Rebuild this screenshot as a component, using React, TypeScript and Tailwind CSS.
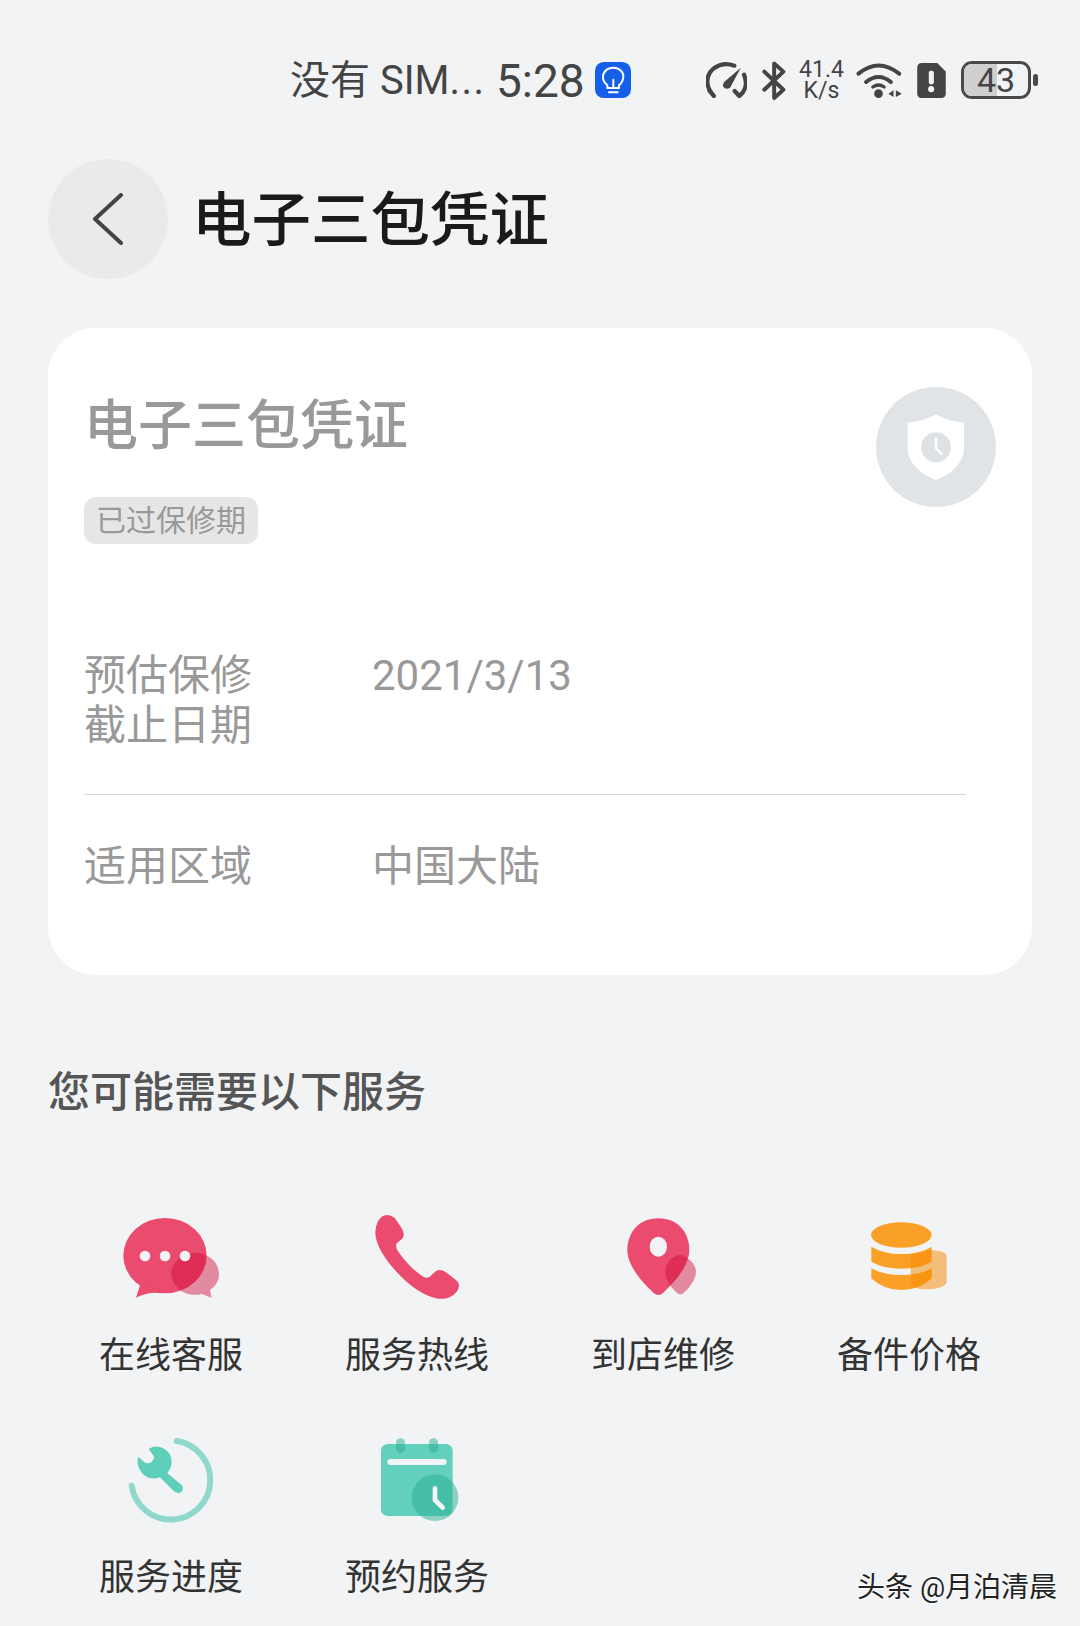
const cjk = "font-['Roboto','Noto_Sans_CJK_SC',sans-serif]";

function ChatIcon() {
  return (
    <svg viewBox="63 39 300 270" className="h-full w-full">
      <ellipse cx="195" cy="167" rx="125" ry="113" fill="#eb4b6e" />
      <path d="M122 250 L108 293 Q145 275 180 279 Z" fill="#eb4b6e" />
      <path
        d="M286 159 C326 159 357 187 357 222 C357 245 346 258 330 270 L335 293 L305 282 C292 286 270 286 250 277 C228 262 214 245 214 222 C214 187 246 159 286 159 Z"
        fill="#d00a3a"
        opacity="0.45"
      />
      <circle cx="135" cy="168" r="16" fill="#f7f3f5" />
      <circle cx="195" cy="168" r="16" fill="#f7f3f5" />
      <circle cx="255" cy="168" r="16" fill="#f7f3f5" />
    </svg>
  );
}

function PhoneIcon() {
  return (
    <svg viewBox="801 39 300 270" className="h-full w-full">
      <path
        d="M845 50 Q865 38 885 55 L905 85 Q918 105 905 118 L890 130 Q885 140 895 155 Q930 205 970 230 Q985 238 995 225 L1008 213 Q1022 205 1040 218 L1068 240 Q1085 255 1070 275 Q1050 300 1015 296 Q950 285 880 205 Q825 140 826 95 Q828 65 845 50 Z"
        fill="#eb4b6e"
      />
    </svg>
  );
}

function PinIcon() {
  return (
    <svg viewBox="39 39 300 270" className="h-full w-full">
      <path
        d="M175 55 C235 55 268 100 268 150 C268 205 205 265 185 282 Q175 288 165 282 C145 265 82 205 82 150 C82 100 115 55 175 55 Z"
        fill="#eb4b6e"
      />
      <ellipse cx="175" cy="140" rx="26" ry="30" fill="#f1f3f5" />
      <path
        d="M243 165 C270 175 288 195 288 215 C288 240 262 270 248 281 Q241 285 234 281 C215 265 196 240 196 215 C196 185 220 165 243 165 Z"
        fill="#d00a3a"
        opacity="0.45"
      />
    </svg>
  );
}

function StackIcon() {
  return (
    <svg viewBox="777 39 300 270" className="h-full w-full">
      <ellipse cx="904" cy="105" rx="91" ry="38" fill="#fba026" />
      <path d="M814 140 Q850 162 904 162 Q960 162 995 140 L995 185 Q960 206 904 206 Q850 206 814 185 Z" fill="#fba026" />
      <path d="M814 205 Q850 225 904 225 Q960 225 995 205 L995 235 Q960 270 904 270 Q850 270 814 235 Z" fill="#fba026" />
      <path
        d="M990 150 C1025 152 1040 158 1040 170 V245 C1040 262 1000 268 975 268 C955 268 940 262 932 255 V162 C955 162 975 158 990 150 Z"
        fill="#f58a00"
        opacity="0.5"
      />
    </svg>
  );
}

function WrenchIcon() {
  return (
    <svg viewBox="33 45 300 270" className="h-full w-full">
      <path d="M200 63 A118.5 118.5 0 1 1 65 197" fill="none" stroke="#8fd8cb" strokeWidth="18" strokeLinecap="round" />
      <path
        d="M116 86 Q150 68 178 100 Q195 130 172 160 L215 195 Q225 210 210 218 Q198 222 188 210 L150 172 Q110 185 90 150 Q78 130 85 110 L105 128 Q125 135 133 112 Z"
        fill="#5dcfba"
      />
    </svg>
  );
}

function CalendarIcon() {
  return (
    <svg viewBox="771 45 300 270" className="h-full w-full">
      <rect x="813" y="72" width="215" height="216" rx="20" fill="#62d0bc" />
      <rect x="858" y="55" width="27" height="43" rx="13" fill="#2aae96" opacity="0.5" />
      <rect x="957" y="55" width="27" height="43" rx="13" fill="#2aae96" opacity="0.5" />
      <rect x="832" y="117" width="178" height="18" rx="9" fill="#f1f3f5" />
      <circle cx="975" cy="233" r="70" fill="#2aae96" opacity="0.5" />
      <path d="M975 205 V240 L998 263" fill="none" stroke="#f5f7f8" strokeWidth="14" strokeLinecap="round" strokeLinejoin="round" />
    </svg>
  );
}

const services = [
  { label: "在线客服", icon: <ChatIcon /> },
  { label: "服务热线", icon: <PhoneIcon /> },
  { label: "到店维修", icon: <PinIcon /> },
  { label: "备件价格", icon: <StackIcon /> },
  { label: "服务进度", icon: <WrenchIcon /> },
  { label: "预约服务", icon: <CalendarIcon /> },
];

function StatusBar() {
  return (
    <div className="flex h-[40px] items-center pl-[290px] text-[#444444]">
      <span className="w-[196px] whitespace-nowrap pt-[2px] text-[40px] leading-[40px]">
        没有 SIM<span className="tracking-[1.5px]">...</span>
      </span>
      <span className="ml-[10px] w-[85px] pt-[2px] font-['Roboto'] text-[46px] leading-[40px]">5:28</span>
      <svg viewBox="975 65 108 108" className="ml-[14px] h-[36px] w-[36px]">
        <rect x="975" y="65" width="108" height="108" rx="26" fill="#1560e8" />
        <path
          d="M1012 135 C1000 125 997 112 1000 102 C1005 88 1018 82 1030 82 C1045 82 1058 92 1060 105 C1061 118 1055 128 1047 135 V143 H1012 Z"
          fill="none"
          stroke="#fff"
          strokeWidth="6"
          strokeLinejoin="round"
        />
        <path d="M1017 156 H1043 M1030 118 V140" fill="none" stroke="#fff" strokeWidth="6" strokeLinecap="round" />
      </svg>
      <svg viewBox="48 62 126 108" className="ml-[75px] h-[36px] w-[41px]">
        <path d="M72 165 C45 135 45 100 75 78 C95 65 115 65 135 72 M58 148 L72 165" fill="none" stroke="#444" strokeWidth="13" strokeLinecap="round" />
        <path d="M165 100 C175 125 170 150 150 165 L136 150" fill="none" stroke="#444" strokeWidth="13" strokeLinecap="round" />
        <path d="M155 78 L122 140 Q108 148 100 135 Q100 122 112 115 Z" fill="#444" />
      </svg>
      <svg viewBox="212 58 76 118" className="ml-[14px] h-[39px] w-[25px]">
        <path d="M222 90 L280 145 L252 170 V65 L280 90 L222 145" fill="none" stroke="#444" strokeWidth="12" strokeLinejoin="round" strokeLinecap="round" />
      </svg>
      <div className="ml-[13px] w-[45px] text-center font-['Roboto'] text-[23px] leading-[21px]">
        41.4
        <br />
        K/s
      </div>
      <svg viewBox="503 62 137 108" className="ml-[12px] h-[36px] w-[46px]">
        <path d="M510 97 Q570 48 632 97 M533 122 Q570 92 607 122" fill="none" stroke="#444" strokeWidth="12" strokeLinecap="round" />
        <path d="M553 137 Q570 125 587 137" fill="none" stroke="#444" strokeWidth="10" strokeLinecap="round" />
        <circle cx="570" cy="157" r="13" fill="#444" />
        <path d="M615 147 L600 157 L615 167 Z M622 147 L640 157 L622 167 Z" fill="#444" />
      </svg>
      <svg viewBox="686 65 84 103" className="ml-[15px] h-[35px] w-[29px]">
        <path d="M700 65 H745 L770 90 V155 Q770 168 757 168 H699 Q686 168 686 155 V79 Q686 65 700 65 Z" fill="#444" />
        <rect x="720" y="88" width="15" height="40" rx="6" fill="#f1f3f5" />
        <circle cx="727" cy="142" r="9" fill="#f1f3f5" />
      </svg>
      <div className="relative ml-[15px] flex h-[38px] w-[70px] items-center justify-center overflow-hidden rounded-[11px] border-[3px] border-[#4a4a4a]">
        <div className="absolute inset-y-0 left-0 w-[33px] bg-[#cfcfcf]" />
        <span className="relative font-['Roboto'] text-[34px] font-normal leading-none">43</span>
      </div>
      <div className="ml-[2px] h-[12px] w-[5px] rounded-full bg-[#4a4a4a]" />
    </div>
  );
}

function ShieldBadge() {
  return (
    <svg viewBox="108 51 360 360" className="-mt-[13px] h-[120px] w-[120px]">
      <circle cx="288" cy="231" r="180" fill="#e1e4e7" />
      <path d="M288 132 C310 148 345 156 372 158 V235 C372 280 330 315 288 330 C246 315 203 280 203 235 V158 C230 156 266 148 288 132 Z" fill="#fff" />
      <circle cx="288" cy="232" r="45" fill="#dfe2e5" />
      <path d="M288 205 V235 L305 252" fill="none" stroke="#fff" strokeWidth="7" strokeLinecap="round" />
    </svg>
  );
}

export default function App() {
  return (
    <div className={`relative h-[1626px] w-[1080px] overflow-hidden bg-[#f1f3f5] pt-[60px] ${cjk}`}>
      <StatusBar />

      <div className="mt-[59px] flex items-center pl-[48px]">
        <div className="flex h-[120px] w-[120px] items-center justify-center rounded-full bg-[#e8eaec]">
          <svg viewBox="0 0 32 52" className="h-[52px] w-[32px]">
            <path d="M29 2 L3 26 L29 50" fill="none" stroke="#444" strokeWidth="4" strokeLinecap="round" strokeLinejoin="round" />
          </svg>
        </div>
        <h1 className="ml-[24px] pt-[4px] text-[59.5px] font-medium leading-[70px] text-[#1a1a1a]">电子三包凭证</h1>
      </div>

      <div className="mx-[48px] mt-[49px] h-[647px] rounded-[48px] bg-white px-[36px] pt-[72px]">
        <div className="flex items-start justify-between">
          <div>
            <div className="text-[54px] font-medium leading-[54px] text-[#999999]">电子三包凭证</div>
            <div className="mt-[43px] flex h-[47px] w-[174px] items-center justify-center rounded-[12px] bg-[#e6e6e6] text-[30px] text-[#999999]">
              已过保修期
            </div>
          </div>
          <ShieldBadge />
        </div>

        <div className="mr-[30px] mt-[107px] flex border-b border-[#d9d9d9] pb-[43px] text-[42px] leading-[50px] text-[#999999]">
          <div className="w-[288px]">
            预估保修
            <br />
            截止日期
          </div>
          <div>2021/3/13</div>
        </div>
        <div className="mt-[47px] flex text-[42px] leading-[50px] text-[#999999]">
          <div className="w-[288px]">适用区域</div>
          <div>中国大陆</div>
        </div>
      </div>

      <h2 className="ml-[48px] mt-[93px] text-[42px] font-medium leading-[50px] text-[#555555]">您可能需要以下服务</h2>

      <div className="mx-[48px] mt-[95px] grid grid-cols-4 gap-y-[54px]">
        {services.map((s) => (
          <div key={s.label} className="flex flex-col items-center">
            <div className="h-[90px] w-[100px]">{s.icon}</div>
            <div className="mt-[28px] text-[36px] leading-[50px] text-[#333333]">{s.label}</div>
          </div>
        ))}
      </div>

      <div className="absolute left-[857px] top-[1570px] whitespace-nowrap text-[28px] leading-[36px] text-[#222222] [text-shadow:0_1px_1px_#ffffff,0_-1px_1px_#ffffff]">
        头条 @月泊清晨
      </div>
    </div>
  );
}
